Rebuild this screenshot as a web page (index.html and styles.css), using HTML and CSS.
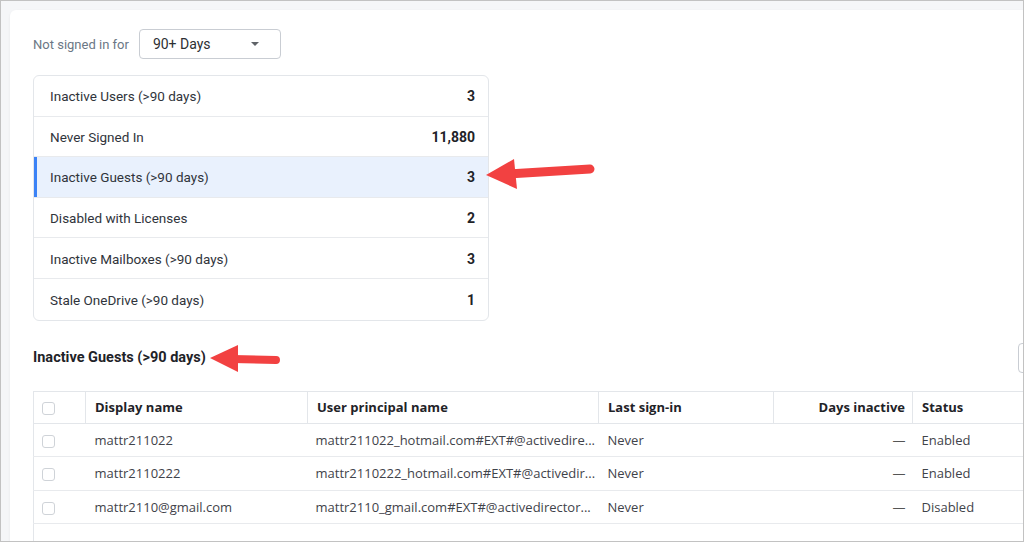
FILE: index.html
```html
<!DOCTYPE html>
<html lang="en">
<head>
    <meta charset="UTF-8">
    <meta name="viewport" content="width=device-width, initial-scale=1.0">
    <title>Inactive Accounts</title>
    <link rel="stylesheet" href="styles.css">
</head>
<body>
    <div class="screen">
        <div class="card">
            <div class="toolbar">
                <span class="toolbar-label">Not signed in for</span>
                <div class="select">
                    <span>90+ Days</span>
                    <span class="caret"></span>
                </div>
            </div>

            <ul class="summary">
                <li class="summary-row"><span>Inactive Users (&gt;90 days)</span><b>3</b></li>
                <li class="summary-row"><span>Never Signed In</span><b>11,880</b></li>
                <li class="summary-row active"><span>Inactive Guests (&gt;90 days)</span><b>3</b></li>
                <li class="summary-row"><span>Disabled with Licenses</span><b>2</b></li>
                <li class="summary-row"><span>Inactive Mailboxes (&gt;90 days)</span><b>3</b></li>
                <li class="summary-row"><span>Stale OneDrive (&gt;90 days)</span><b>1</b></li>
            </ul>

            <div class="section-head">
                <h2>Inactive Guests (&gt;90 days)</h2>
                <button class="export" aria-label="Export"></button>
            </div>

            <table class="grid">
                <colgroup>
                    <col style="width:52px">
                    <col style="width:222px">
                    <col style="width:291px">
                    <col style="width:175px">
                    <col style="width:139px">
                    <col>
                </colgroup>
                <thead>
                    <tr>
                        <th><span class="check"></span></th>
                        <th>Display name</th>
                        <th>User principal name</th>
                        <th>Last sign-in</th>
                        <th class="num">Days inactive</th>
                        <th>Status</th>
                    </tr>
                </thead>
                <tbody>
                    <tr>
                        <td><span class="check"></span></td>
                        <td>mattr211022</td>
                        <td class="clip">mattr211022_hotmail.com#EXT#@activedire...</td>
                        <td>Never</td>
                        <td class="num">—</td>
                        <td>Enabled</td>
                    </tr>
                    <tr>
                        <td><span class="check"></span></td>
                        <td>mattr2110222</td>
                        <td class="clip">mattr2110222_hotmail.com#EXT#@activedir...</td>
                        <td>Never</td>
                        <td class="num">—</td>
                        <td>Enabled</td>
                    </tr>
                    <tr>
                        <td><span class="check"></span></td>
                        <td>mattr2110@gmail.com</td>
                        <td class="clip">mattr2110_gmail.com#EXT#@activedirector...</td>
                        <td>Never</td>
                        <td class="num">—</td>
                        <td>Disabled</td>
                    </tr>
                    <tr class="empty">
                        <td></td><td></td><td></td><td></td><td></td><td></td>
                    </tr>
                </tbody>
            </table>
        </div>

        <!-- annotation arrows -->
        <svg class="arrows" width="1024" height="543" viewBox="0 0 1024 543">
            <line x1="508" y1="174" x2="590" y2="169" stroke="#f24141" stroke-width="9" stroke-linecap="round"/>
            <polygon points="486,175 514,159 517,189" fill="#f24141"/>
            <line x1="232" y1="359" x2="276" y2="360" stroke="#f24141" stroke-width="8" stroke-linecap="round"/>
            <polygon points="210,358 238,345 238,372" fill="#f24141"/>
        </svg>
    </div>
</body>
</html>
```

FILE: styles.css
```css
body {
    margin: 0;
    font-family: Roboto, "Liberation Sans", Arial, sans-serif;
    color: #2b2f36;
    background: #fff;
}
.screen {
    position: relative;
    width: 1024px;
    height: 542px;
    box-sizing: border-box;
    border: 1px solid #c2c2c2;
    background: #f5f6f8;
    padding: 9px 0 0 9px;
    overflow: hidden;
}
.card {
    width: 1100px;
    box-sizing: border-box;
    min-height: 600px;
    background: #fff;
    border-radius: 6px;
    box-shadow: 0 1px 3px rgba(0,0,0,0.06);
    padding: 19px 23px 0 23px;
}
.toolbar {
    display: flex;
    align-items: center;
    gap: 10px;
}
.toolbar-label {
    font-size: 13px;
    color: #6b7785;
}
.select {
    display: flex;
    align-items: center;
    justify-content: space-between;
    width: 142px;
    height: 30px;
    box-sizing: border-box;
    border: 1px solid #c9cdd3;
    border-radius: 4px;
    padding: 0 21px 0 13px;
    font-size: 14px;
    color: #2d2f33;
}
.caret {
    width: 0;
    height: 0;
    border-left: 4px solid transparent;
    border-right: 4px solid transparent;
    border-top: 4px solid #5f6368;
}
.summary {
    list-style: none;
    margin: 16px 0 0 0;
    padding: 0;
    width: 454px;
    border: 1px solid #e3e6ea;
    border-radius: 6px;
    overflow: hidden;
}
.summary-row {
    display: flex;
    align-items: center;
    justify-content: space-between;
    height: 40.6px;
    box-sizing: border-box;
    padding: 1px 13px 0 16px;
    border-bottom: 1px solid #e8eaed;
    font-size: 13.5px;
    color: #30343b;
}
.summary-row:last-child {
    border-bottom: none;
}
.summary-row b {
    font-size: 14px;
    font-weight: 700;
    color: #1f2328;
}
.summary-row.active {
    background: #e9f1fd;
    box-shadow: inset 3px 0 0 #3b82f6;
}
.section-head {
    display: flex;
    align-items: center;
    justify-content: space-between;
    margin-top: 22px;
    height: 30px;
}
.section-head h2 {
    margin: 0;
    font-size: 14.5px;
    font-weight: 700;
    color: #1f2328;
}
.export {
    width: 69px;
    height: 30px;
    background: #fff;
    border: 1px solid #c9cdd3;
    border-radius: 4px;
}
.grid {
    margin-top: 18px;
    width: 100%;
    table-layout: fixed;
    border-collapse: collapse;
    border: 1px solid #e3e6ea;
    font-family: "Open Sans", "Noto Sans", sans-serif;
    font-size: 13px;
}
.grid th {
    height: 31px;
    padding: 0 8px 0 9px;
    text-align: left;
    font-weight: 700;
    color: #1f2328;
    border-right: 1px solid #e3e6ea;
    border-bottom: 1px solid #e3e6ea;
}
.grid th:first-child,
.grid td:first-child {
    padding-left: 8px;
}
.grid td {
    height: 32.6px;
    padding: 0 8px 0 9px;
    color: #3f434a;
    border-bottom: 1px solid #e8eaed;
    white-space: nowrap;
}
.grid td.clip {
    overflow: hidden;
    text-overflow: clip;
    padding: 0 3px 0 8px;
}
.grid .num {
    text-align: right;
    padding-right: 7px;
}
.grid td.num {
    color: #555;
}
.check {
    display: inline-block;
    vertical-align: middle;
    width: 13px;
    height: 13px;
    box-sizing: border-box;
    border: 1px solid #cfd3d8;
    border-radius: 3px;
    background: #fff;
}
.arrows {
    position: absolute;
    top: -1px;
    left: -1px;
    pointer-events: none;
}
```
